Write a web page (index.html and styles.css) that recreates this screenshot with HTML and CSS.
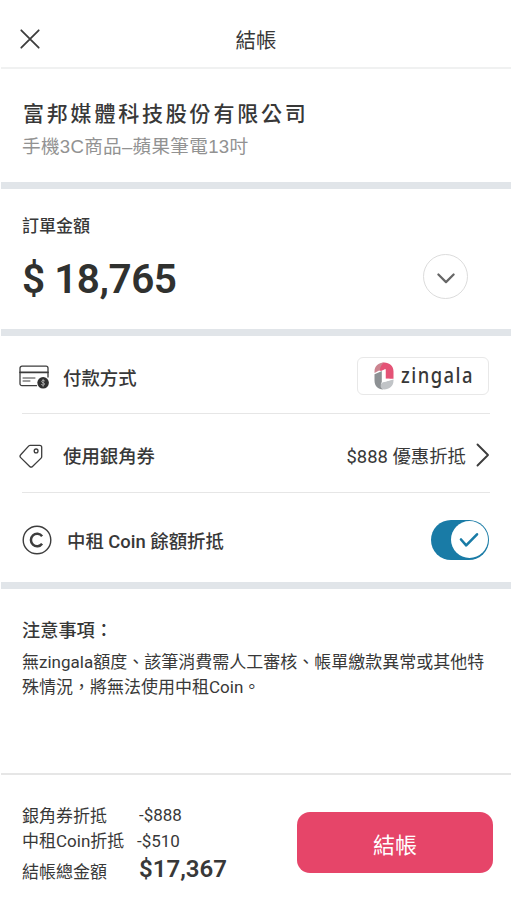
FILE: index.html
```html
<!DOCTYPE html>
<html lang="zh-Hant">
<head>
<meta charset="utf-8">
<meta name="viewport" content="width=device-width, initial-scale=1">
<title>結帳</title>
<link rel="stylesheet" href="styles.css">
</head>
<body>
<div class="page">
  <header class="topbar">
    <svg class="close" viewBox="0 0 20 20"><path d="M1.3 1.3 18.7 18.7M18.7 1.3 1.3 18.7"/></svg>
    <h1 class="title"><span>結帳</span></h1>
  </header>

  <section class="merchant">
    <h2 class="merchant-name"><span>富邦媒體科技股份有限公司</span></h2>
    <p class="product"><span>手機3C商品–蘋果筆電13吋</span></p>
  </section>

  <section class="order">
    <div>
      <p class="order-label"><span>訂單金額</span></p>
      <p class="order-total"><span>$ 18,765</span></p>
    </div>
    <button class="expand" aria-label="展開">
      <svg viewBox="0 0 18 11"><path d="M1.4 1.5 9 9.1 16.6 1.5"/></svg>
    </button>
  </section>

  <section class="options">
    <div class="row row-pay">
      <svg class="icon-card" viewBox="0 0 30 24">
        <path d="M17.5 20.7H3a2 2 0 0 1-2-2V3.2a2 2 0 0 1 2-2h24a2 2 0 0 1 2 2V12"/>
        <path class="stripe" d="M1 7.3h28"/>
        <path class="thin" d="M4 13h12M4 16h7"/>
        <circle class="coin" cx="24.1" cy="17.800" r="5.8"/>
        <path class="coin-mark" d="M25.700 15.900c-.5-.6-3.100-.8-3.100.6 0 1.500 3 .9 3 2.500 0 1.500-2.600 1.400-3.200.6M24.100 14.300v7"/>
      </svg>
      <span class="row-label">付款方式</span>
      <div class="brand">
        <svg class="brand-mark" viewBox="0 0 20 28">
          <path class="m-pink" d="M10 .5c5.700 0 9.500 3.500 9.500 9v7.200h-8V7L7 9 3 7.500C4 3.500 6.500.5 10 .5Z"/>
          <path class="m-rose" d="M.5 11V9.500C.5 4 4.500.5 10 .5 7.500 2.500 6 5 6 8Z"/>
          <path class="m-gray" d="M.5 12.200 8 9v10.800L6.800 22l2.200 5.500C4 27.200.5 24 .5 18.500Z"/>
          <path class="m-light" d="M8 20.500 19.500 17.600v.9c0 5.500-4 9-9.500 9-3-.5-4.700-3.500-2-7Z"/>
          <path class="m-white" d="M7.800 9.300 11.500 7.300v9.400h4v1.800l-7.700 2Z"/>
        </svg>
        <span class="brand-name">zingala</span>
      </div>
    </div>
    <div class="row row-coupon">
      <svg class="icon-tag" viewBox="0 0 24 24">
        <path d="M11.200 1.300h9.500a2 2 0 0 1 2 2v9.400a2 2 0 0 1-.6 1.400l-8.600 8.400a2 2 0 0 1-2.800 0l-9-8.900a2 2 0 0 1 0-2.800l8.100-8.900a2 2 0 0 1 1.400-.6Z"/>
        <circle cx="17.100" cy="6.900" r="1.900"/>
      </svg>
      <span class="row-label">使用銀角券</span>
      <span class="coupon-value"><span>$888 優惠折抵</span></span>
      <svg class="chevron" viewBox="0 0 14 24"><path d="M1.500 1.500 12 12 1.500 22.500"/></svg>
    </div>
    <div class="row row-coin">
      <svg class="icon-coin" viewBox="0 0 30 30">
        <circle cx="15" cy="15" r="13.800"/>
        <path class="c-mark" d="M20.100 11.300a6.200 6.200 0 1 0 0 7.400"/>
      </svg>
      <span class="row-label">中租 Coin 餘額折抵</span>
      <div class="toggle" role="switch" aria-checked="true">
        <div class="knob"><svg viewBox="0 0 20 16"><path d="M2 7.500 7.200 13.300 18 2.300"/></svg></div>
      </div>
    </div>
  </section>

  <section class="notice">
    <h3 class="notice-title"><span>注意事項：</span></h3>
    <p class="notice-text"><span>無zingala額度、該筆消費需人工審核、帳單繳款異常或其他特</span><br><span>殊情況，將無法使用中租Coin。</span></p>
  </section>

  <footer class="footer">
    <div class="summary">
      <span class="s-label">銀角券折抵</span><span class="s-value">-$888</span>
      <span class="s-label">中租Coin折抵</span><span class="s-value s-shift">-$510</span>
      <span class="s-label s-low">結帳總金額</span><span class="s-total">$17,367</span>
    </div>
    <button class="submit">結帳</button>
  </footer>
</div>
</body>
</html>
```
FILE: styles.css
```css
* { box-sizing: border-box; margin: 0; padding: 0; }

body {
  background: #fff;
  color: #383838;
  font-family: Roboto, "Noto Sans CJK TC", sans-serif;
}

svg {
  display: block;
  flex: none;
  fill: none;
  stroke: #3d3d3d;
  stroke-linecap: round;
  stroke-linejoin: round;
}

button { font: inherit; border: 0; background: none; }

.page {
  width: 512px;
  height: 910px;
  padding: 0 1px;
  display: flex;
  flex-direction: column;
  overflow: hidden;
}

.topbar {
  height: 69px;
  border-bottom: 2px solid #f0f1f1;
  display: grid;
  grid-template-columns: 60px 1fr 60px;
  align-items: center;
  padding-top: 11px;
}
.close { width: 20px; height: 20px; margin-left: 19px; margin-top: -1px; stroke-width: 1.8; }
.title { font-size: 20.5px; line-height: 30px; font-weight: 400; text-align: center; padding-top: 3px; }

.merchant { height: 120px; padding: 28px 22px 0; border-bottom: 7px solid #e1e5e9; }
.merchant-name {
  font-size: 21px;
  line-height: 34px;
  font-weight: 500;
  letter-spacing: 2.8px;
}
.product {
  font-size: 18.6px;
  line-height: 30px;
  letter-spacing: .3px;
  margin-left: -1px;
  padding-top: 1px;
  color: #929292;
  font-family: "Liberation Sans", "Noto Sans CJK TC", sans-serif;
}

.order {
  height: 147px;
  padding: 23px 43px 0 21px;
  border-bottom: 7px solid #e1e5e9;
  display: flex;
  justify-content: space-between;
}
.order-label { font-size: 17px; line-height: 28px; font-weight: 500; }
.order-total {
  font-size: 40.5px;
  line-height: 50px;
  font-weight: 600;
  letter-spacing: -.5px;
  margin-top: 14px;
  color: #30312f;
}
.expand {
  width: 45px;
  height: 45px;
  margin-top: 42px;
  border: 1.5px solid #dcdcdc;
  border-radius: 50%;
  display: grid;
  place-items: center;
}
.expand svg { width: 18px; height: 11px; margin-top: 4px; stroke: #666; stroke-width: 2.2; }

.options { height: 253px; padding: 0 21px; border-bottom: 7px solid #e1e5e9; }
.row { display: flex; align-items: center; border-bottom: 1px solid #e6e6e6; }
.row-label { font-size: 18.4px; line-height: 28px; font-weight: 500; padding-top: 2px; }
.row-pay { height: 78px; padding-top: 3px; }
.row-pay .row-label { padding-top: 5px; }
.row-coupon { height: 79px; padding-top: 6px; }
.row-coin { height: 89px; padding-top: 4px; border-bottom: 0; }
.row-coin .row-label { padding-top: 4px; }

.icon-card { width: 30px; height: 24px; margin: 2px 14px 0 -3px; stroke-width: 1.3; }
.icon-card .stripe { stroke-width: 1.7; }
.icon-card .thin { stroke-width: 1; }
.icon-card .coin { fill: #303030; stroke: none; }
.icon-card .coin-mark { stroke: #bbb; stroke-width: .8; }

.brand {
  width: 132px;
  height: 38px;
  margin-left: auto;
  margin-right: 1px;
  border: 1px solid #e8e8e8;
  border-radius: 6px;
  display: flex;
  align-items: center;
  padding-left: 16px;
}
.brand-mark { width: 20px; height: 28px; stroke: none; }
.m-white { fill: #fff; }
.m-pink { fill: #e45376; }
.m-rose { fill: #cc8490; }
.m-gray { fill: #8d9194; }
.m-light { fill: #c1c4c7; }
.brand-name {
  margin-left: 7px;
  font: 500 21px/30px "Noto Sans", sans-serif;
  letter-spacing: 1.7px;
  white-space: nowrap;
  margin-top: -3px;
  transform: scaleX(.875);
  transform-origin: left;
}

.icon-tag { width: 24px; height: 24px; margin: 0 20px 0 -3px; stroke-width: 1.3; }
.coupon-value { margin-left: auto; font-size: 18.4px; line-height: 28px; padding-top: 2px; }
.chevron { width: 14px; height: 24px; margin: -2px 0 0 10px; stroke-width: 1.9; }

.icon-coin { width: 30px; height: 30px; margin-right: 15px; stroke-width: 1.4; }
.icon-coin .c-mark { stroke-width: 2.5; stroke-linecap: butt; }
.toggle {
  width: 58px;
  height: 40px;
  margin-left: auto;
  margin-right: 1px;
  border-radius: 20px;
  background: #197ba6;
  padding: 1.5px;
  display: flex;
  justify-content: flex-end;
}
.knob { width: 37px; height: 37px; border-radius: 50%; background: #fff; display: grid; place-items: center; }
.knob svg { width: 20px; height: 16px; stroke: #197ba6; stroke-width: 2.6; }

.notice { height: 184px; padding: 28px 21px 0; }
.notice-title { font-size: 18.2px; line-height: 28px; font-weight: 500; }
.notice-text { font-size: 17px; line-height: 25px; margin-top: 5px; white-space: nowrap; }

.footer {
  flex: 1;
  border-top: 2px solid #e6e6e6;
  display: flex;
  justify-content: space-between;
  padding: 0 18px 0 21px;
}
.summary {
  display: grid;
  grid-template-columns: 117px auto;
  grid-template-rows: 26px 25px 33px;
  align-items: center;
  align-content: start;
  padding-top: 26px;
  font-size: 17px;
  white-space: nowrap;
}
.s-value { padding-top: 2px; }
.s-shift { margin-left: -2px; }
.s-low { padding-top: 3px; }
.s-total { font-size: 24px; font-weight: 600; }
.submit {
  width: 196px;
  height: 61px;
  margin-top: 37px;
  border-radius: 13px;
  background: #e64569;
  color: #fff;
  font-size: 22px;
}
```
